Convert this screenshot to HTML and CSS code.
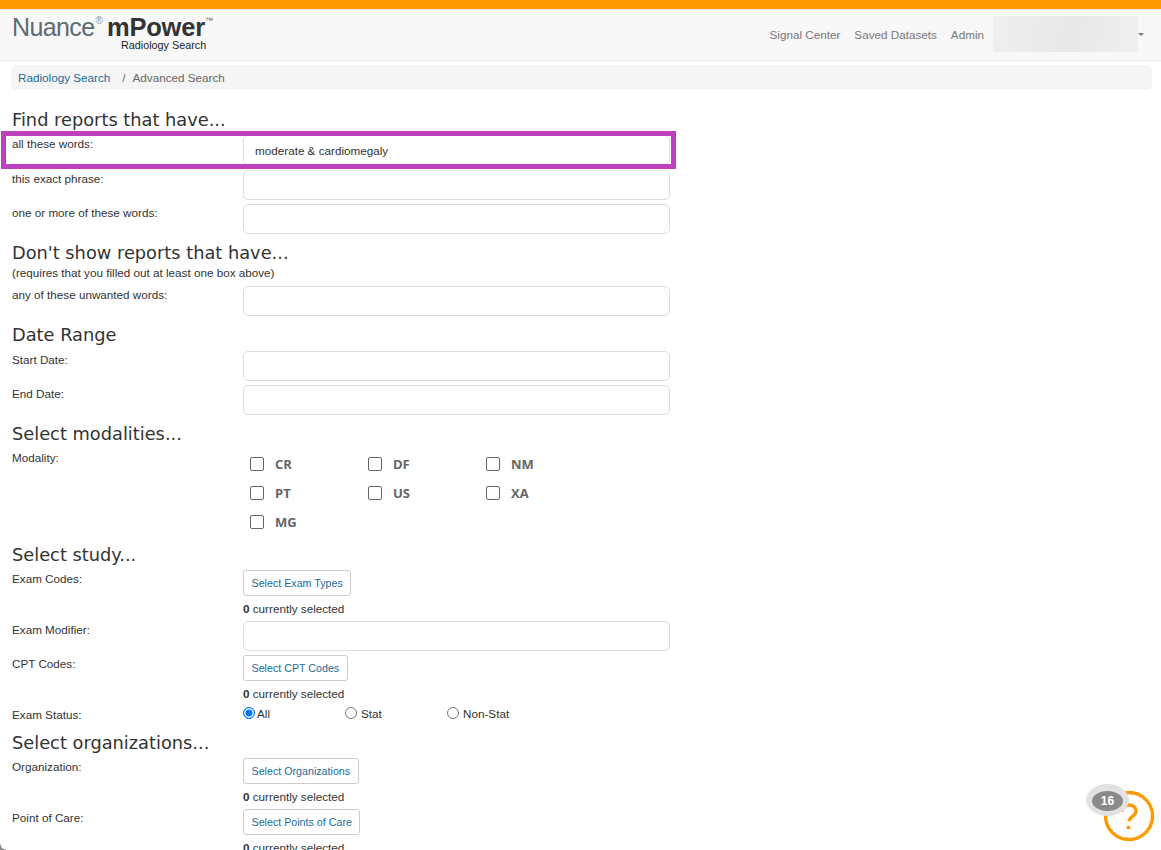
FILE: index.html
```html
<!DOCTYPE html>
<html lang="en">
<head>
    <meta charset="UTF-8">
    <meta name="viewport" content="width=device-width, initial-scale=1.0">
    <title>Advanced Search</title>
    <link rel="stylesheet" href="styles.css">
</head>
<body>

    <div class="top-strip"></div>

    <!-- Navbar -->
    <nav class="navbar">
        <div class="brand">
            <div class="brand-line">
                <span class="brand-nuance">Nuance</span><span class="brand-reg">®</span>
                <span class="brand-mpower">mPower</span><span class="brand-tm">™</span>
            </div>
            <div class="brand-sub">Radiology Search</div>
        </div>
        <div class="nav-links">
            <a href="#">Signal Center</a>
            <a href="#">Saved Datasets</a>
            <a href="#">Admin</a>
            <div class="user-blur"></div>
            <span class="caret"></span>
        </div>
    </nav>

    <div class="breadcrumb">
        <a href="#">Radiology Search</a>
        <span class="crumb-sep">/</span>
        <span>Advanced Search</span>
    </div>

    <form class="search-form">
        <h2 class="first-heading">Find reports that have...</h2>
        <div class="form-row row-first">
            <label>all these words:</label>
            <input type="text" value="moderate &amp; cardiomegaly">
        </div>
        <div class="form-row">
            <label>this exact phrase:</label>
            <input type="text">
        </div>
        <div class="form-row">
            <label>one or more of these words:</label>
            <input type="text">
        </div>

        <h2>Don't show reports that have...</h2>
        <div class="hint">(requires that you filled out at least one box above)</div>
        <div class="form-row">
            <label>any of these unwanted words:</label>
            <input type="text">
        </div>

        <h2>Date Range</h2>
        <div class="form-row row-gap">
            <label>Start Date:</label>
            <input type="text">
        </div>
        <div class="form-row">
            <label>End Date:</label>
            <input type="text">
        </div>

        <h2>Select modalities...</h2>
        <div class="form-row">
            <label>Modality:</label>
            <div class="modalities">
                <div class="modality"><span class="check"></span>CR</div>
                <div class="modality"><span class="check"></span>DF</div>
                <div class="modality"><span class="check"></span>NM</div>
                <div class="modality"><span class="check"></span>PT</div>
                <div class="modality"><span class="check"></span>US</div>
                <div class="modality"><span class="check"></span>XA</div>
                <div class="modality"><span class="check"></span>MG</div>
            </div>
        </div>

        <h2>Select study...</h2>
        <div class="form-row">
            <label>Exam Codes:</label>
            <div>
                <button type="button" class="pick-button">Select Exam Types</button>
                <div class="selected-count"><b>0</b> currently selected</div>
            </div>
        </div>
        <div class="form-row">
            <label>Exam Modifier:</label>
            <input type="text">
        </div>
        <div class="form-row">
            <label>CPT Codes:</label>
            <div>
                <button type="button" class="pick-button">Select CPT Codes</button>
                <div class="selected-count"><b>0</b> currently selected</div>
            </div>
        </div>
        <div class="form-row status-row">
            <label>Exam Status:</label>
            <div class="radios">
                <div class="radio-item"><span class="radio radio-on"></span>All</div>
                <div class="radio-item"><span class="radio"></span>Stat</div>
                <div class="radio-item"><span class="radio"></span>Non-Stat</div>
            </div>
        </div>

        <h2>Select organizations...</h2>
        <div class="form-row">
            <label>Organization:</label>
            <div>
                <button type="button" class="pick-button">Select Organizations</button>
                <div class="selected-count"><b>0</b> currently selected</div>
            </div>
        </div>
        <div class="form-row">
            <label>Point of Care:</label>
            <div>
                <button type="button" class="pick-button">Select Points of Care</button>
                <div class="selected-count"><b>0</b> currently selected</div>
            </div>
        </div>
    </form>

    <!-- Highlight around first field -->
    <div class="highlight"></div>

    <!-- Help widget -->
    <div class="help-widget">
        <svg width="52" height="52" viewBox="0 0 52 52">
            <circle cx="26" cy="26" r="23.5" fill="#fff" stroke="#ff9b00" stroke-width="3.4"/>
            <path d="M19 22c0-4 3-7 7-7s7 2.600 7 6.200c0 5-6.800 5.200-6.800 10" fill="none" stroke="#ff9b00" stroke-width="3.400"/>
            <circle cx="25.500" cy="37.500" r="2" fill="#ff9b00"/>
        </svg>
        <div class="help-halo"><div class="help-count">16</div></div>
    </div>

    <div class="corner"></div>

</body>
</html>
```

FILE: styles.css
```css
/* Basic reset */
* {
    margin: 0;
    padding: 0;
    box-sizing: border-box;
}

html, body {
    height: 850px;
    overflow: hidden;
}

body {
    font-family: 'Liberation Sans', Arial, sans-serif;
    font-size: 11.7px;
    color: #333;
    background: #fff;
    position: relative;
}

a {
    text-decoration: none;
}

.top-strip {
    height: 9px;
    background-color: #ff9b00;
}

/* Navbar */
.navbar {
    height: 52px;
    background-color: #f8f8f8;
    border-top: 1px solid #e7e7e7;
    border-bottom: 1px solid #e7e7e7;
    display: flex;
    justify-content: space-between;
    align-items: flex-start;
    padding: 0 17px 0 12px;
}

.brand {
    width: 220px;
    padding-top: 5px;
}

.brand-line {
    display: flex;
    align-items: flex-start;
    height: 24px;
    white-space: nowrap;
}

.brand-nuance {
    font-size: 25px;
    line-height: 24px;
    letter-spacing: -0.6px;
    color: #5c6b70;
}

.brand-reg {
    font-size: 10px;
    line-height: 12px;
    margin-left: 1px;
    color: #8b9699;
}

.brand-mpower {
    font-size: 25.5px;
    line-height: 24px;
    font-weight: bold;
    color: #333;
    margin-left: 4px;
    letter-spacing: -0.2px;
}

.brand-tm {
    font-size: 8px;
    line-height: 12px;
    color: #666;
}

.brand-sub {
    font-size: 10.8px;
    line-height: 12px;
    margin-left: 109px;
    color: #222;
}

.nav-links {
    display: flex;
    align-items: center;
    padding-top: 6px;
}

.nav-links a {
    color: #777;
    margin-left: 14px;
}

.user-blur {
    width: 145px;
    height: 36px;
    margin-left: 9px;
    background: linear-gradient(100deg, #efefef, #e8e8e8 55%, #f0f0f0);
}

.caret {
    width: 0;
    height: 0;
    border-top: 3px solid #777;
    border-left: 3px solid transparent;
    border-right: 3px solid transparent;
}

/* Breadcrumb */
.breadcrumb {
    height: 25px;
    margin: 4px 9px 0 11px;
    padding: 0 7px;
    background-color: #f5f5f5;
    border-radius: 5px;
    display: flex;
    align-items: center;
    color: #666;
}

.breadcrumb a {
    color: #1b6b9a;
}

.crumb-sep {
    margin: 0 7px 0 12px;
}

/* Form */
.search-form {
    padding: 0 12px;
}

h2 {
    font-family: 'DejaVu Sans', Verdana, sans-serif;
    font-size: 17.8px;
    font-weight: normal;
    line-height: 22px;
    color: #333;
    margin-top: 8px;
    margin-bottom: 4px;
}

.first-heading {
    margin-top: 19px;
}

.form-row {
    display: grid;
    grid-template-columns: 231px 427px;
    margin-bottom: 4px;
}

.row-gap {
    margin-top: 5px;
}

.row-first {
    margin-bottom: 5px;
}

.form-row label {
    padding-top: 2px;
    line-height: 14px;
}

.form-row input {
    width: 427px;
    height: 30px;
    border: 1px solid #ddd;
    border-radius: 5px;
    padding: 0 11px;
    font-family: inherit;
    font-size: 11.7px;
    color: #333;
    background: #fff;
}

.hint {
    line-height: 14px;
    margin-top: -2px;
    margin-bottom: 6px;
}

/* Modalities */
.modalities {
    display: grid;
    grid-template-columns: repeat(3, 118px);
    grid-auto-rows: 29px;
}

.modality {
    display: flex;
    align-items: center;
    padding-left: 7px;
    font-family: 'Open Sans', sans-serif;
    font-size: 13px;
    font-weight: 700;
    color: #666;
}

.check {
    width: 14px;
    height: 14px;
    border: 1px solid #666;
    border-radius: 2px;
    background: #fff;
    margin-right: 11px;
}

/* Buttons */
.pick-button {
    display: block;
    height: 26px;
    padding: 0 7.5px;
    background: #fff;
    border: 1px solid #ccc;
    border-radius: 3px;
    font-family: inherit;
    font-size: 10.7px;
    color: #1b6b9a;
}

.selected-count {
    line-height: 14px;
    margin-top: 6px;
    margin-bottom: 1px;
}

/* Radios */
.status-row {
    margin-bottom: 10px;
}

.radios {
    display: grid;
    grid-template-columns: 102px 102px 102px;
    height: 16px;
    line-height: 16px;
}

.radio-item {
    display: flex;
    align-items: center;
}

.radio {
    width: 12px;
    height: 12px;
    border: 1px solid #767676;
    border-radius: 50%;
    background: #fff;
    margin-right: 4px;
    margin-top: -2px;
}

.radio-on {
    border: 1px solid #0075ff;
    box-shadow: inset 0 0 0 1.5px #fff;
    background: #0075ff;
    margin-right: 2px;
}

/* Overlays */
.highlight {
    position: absolute;
    left: 1px;
    top: 131px;
    width: 675px;
    height: 38px;
    border: 5px solid #bf40bf;
    pointer-events: none;
}

.help-widget {
    position: absolute;
    left: 1086px;
    top: 784px;
    width: 70px;
    height: 60px;
}

.help-widget svg {
    position: absolute;
    left: 17px;
    top: 6px;
}

.help-halo {
    position: absolute;
    left: 0;
    top: 0;
    width: 43px;
    height: 32px;
    padding: 7px 6px;
    border-radius: 50%;
    background-color: #e2e2e2;
}

.help-count {
    width: 31px;
    height: 20px;
    border-radius: 50%;
    background-color: #8a8a8a;
    color: #fff;
    font-weight: bold;
    font-size: 12px;
    line-height: 20px;
    text-align: center;
}

.corner {
    position: absolute;
    left: 0;
    bottom: 0;
    width: 6px;
    height: 6px;
    background: radial-gradient(circle at top right, transparent 5px, #8a8a8a 6px);
}
```
